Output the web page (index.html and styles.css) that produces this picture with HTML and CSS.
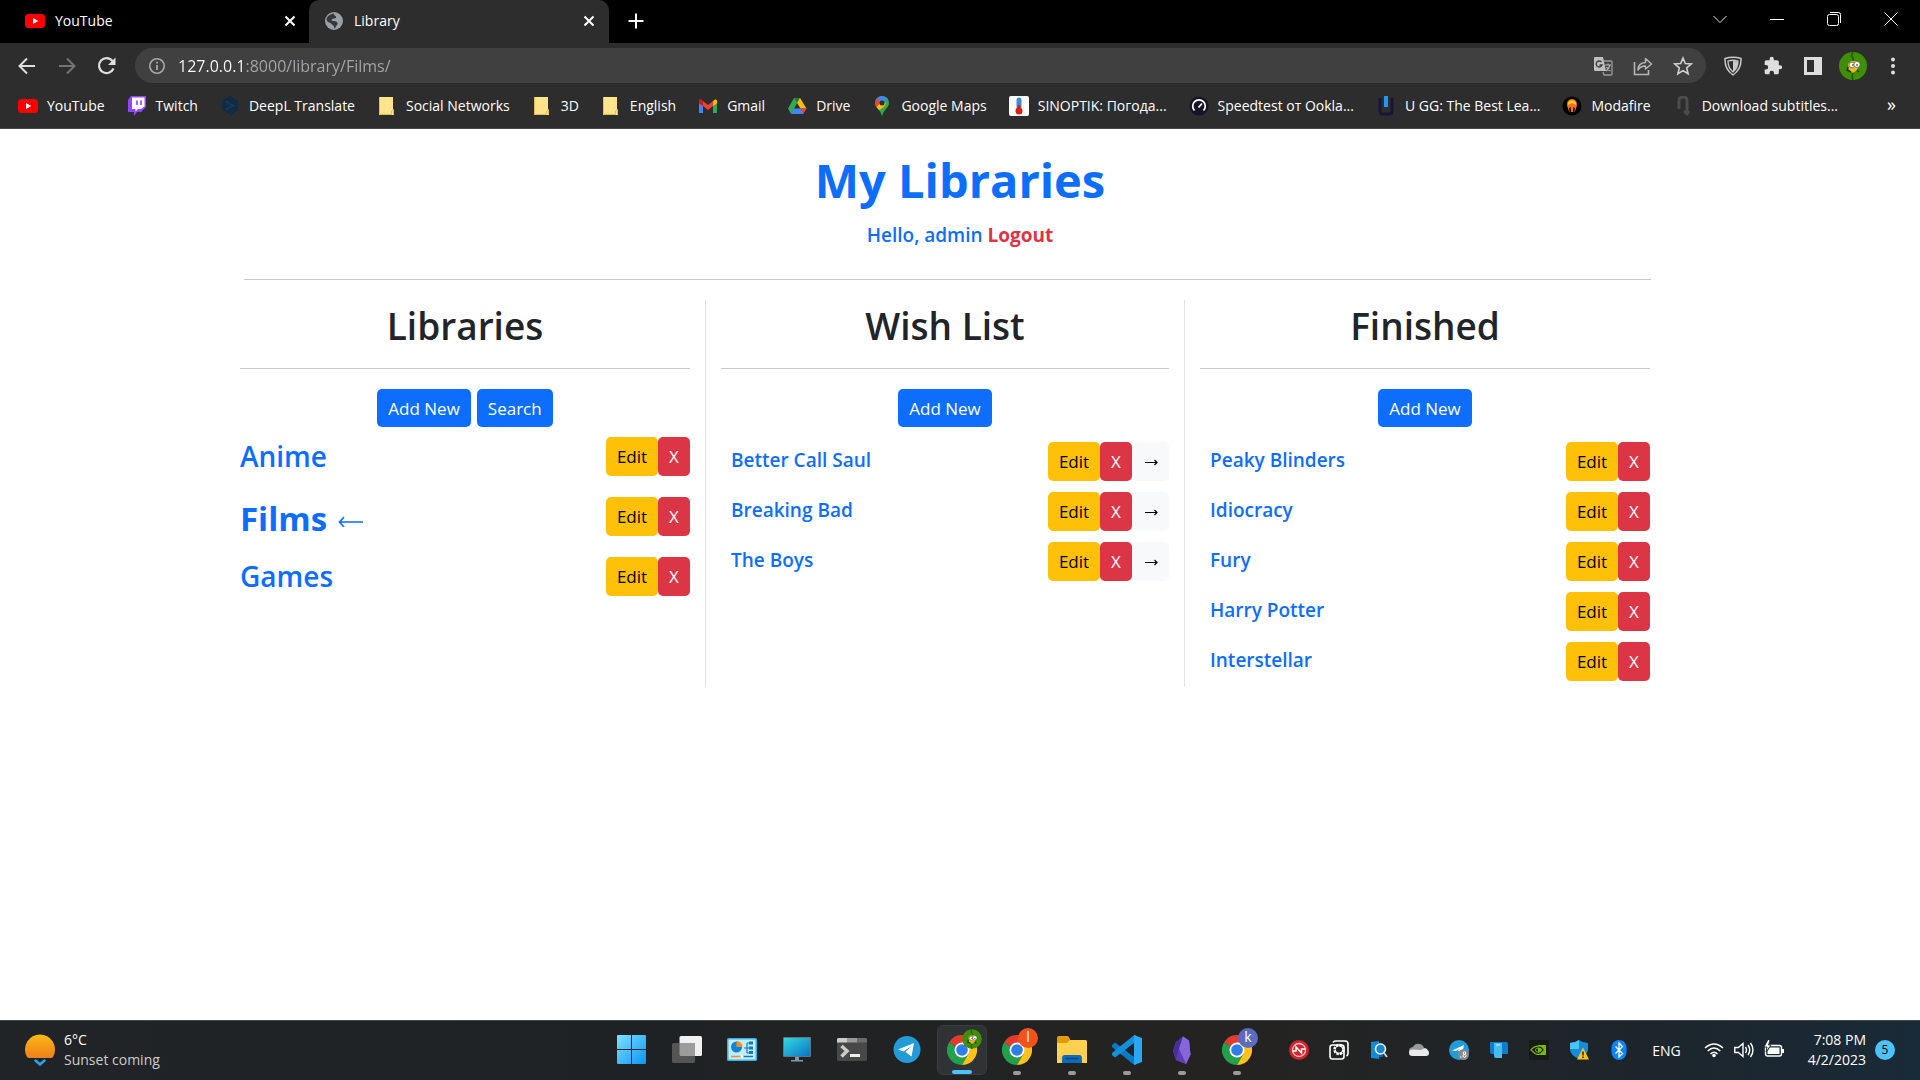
FILE: index.html
```html
<!DOCTYPE html>
<html lang="en">
<head>
<meta charset="utf-8">
<title>Library</title>
<link rel="stylesheet" href="styles.css">
</head>
<body>
<svg class="defs" aria-hidden="true">
  <symbol id="close" viewBox="0 0 12 12"><path d="M1.5 1.5l9 9M10.500 1.500l-9 9" stroke="#fff" stroke-width="2" fill="none"/></symbol>
  <symbol id="youtube" viewBox="0 0 20 20"><rect y="3" width="20" height="14" rx="3.500" fill="#f00"/><path d="M8 7l5.200 3L8 13z" fill="#fff"/></symbol>
  <symbol id="folder" viewBox="0 0 20 20"><path d="M2 1h14v13l1 1v4H2z" fill="#ffe48c"/><path d="M2.500 1v17.500h12V15l2-1.500V18.500" fill="none" stroke="#e3bd4c"/></symbol>
  <symbol id="chrome" viewBox="0 0 30 30">
    <path d="M15 15L2 7.500A15 15 0 0 1 28 7.500z" fill="#e33b2e"/>
    <path d="M15 15L2 7.500A15 15 0 0 0 15 30l6.500-11.200z" fill="#22a04a"/>
    <path d="M15 7.500H28A15 15 0 0 1 15 30l6.500-11.200z" fill="#fcc21b"/>
    <circle cx="15" cy="15" r="7.500" fill="#fff"/><circle cx="15" cy="15" r="5.800" fill="#2f7de9"/>
  </symbol>
  <symbol id="avatar" viewBox="0 0 28 28">
    <circle cx="14" cy="14" r="14" fill="#3f8f04"/><path d="M14 0l-1.500 4 2 3-1 4M14 28l-1-4 1.500-4" stroke="#1f5a00" stroke-width="1.500" fill="none"/>
    <path d="M9 12l3-3h6l2 4-2 5-4 3-4-3z" fill="#e8b92c"/><path d="M9 15l-1 3 4 2M18 18l2 2" stroke="#3a2b08" stroke-width="1.500" fill="none"/>
    <circle cx="13" cy="13" r="2.800" fill="#fff" stroke="#444" stroke-width=".6"/><circle cx="18" cy="12.500" r="3" fill="#fff" stroke="#444" stroke-width=".6"/><circle cx="14" cy="13" r=".8"/><circle cx="18" cy="13" r=".8"/>
  </symbol>
</svg>

<header class="browser">
  <div class="tabs">
    <div class="tab">
      <svg class="fav"><use href="#youtube"/></svg><span class="tab-title">YouTube</span>
      <button class="tab-close" aria-label="Close tab"><svg><use href="#close"/></svg></button>
    </div>
    <div class="tab active">
      <svg class="fav" viewBox="0 0 20 20"><circle cx="10" cy="10" r="9" fill="#9aa0a6"/><path d="M10 2.500c-1 2 3 2 2 4.500-2 1-4 0-4.500 2.500 2 1 5 0 6 2.500.5 2-1.500 2-2 4.500l-1.500 1.500C11 15 9 14.500 7.500 13c-1-1.500-4-1.500-5-4C3 5 6 3 10 2.500z" fill="#35373a"/></svg>
      <span class="tab-title">Library</span>
      <button class="tab-close" aria-label="Close tab"><svg><use href="#close"/></svg></button>
    </div>
    <button class="new-tab" aria-label="New tab"><svg viewBox="0 0 16 16"><path d="M8 .5v15M.5 8h15" stroke="#fff" stroke-width="2"/></svg></button>
    <div class="window-buttons">
      <button aria-label="Search tabs"><svg viewBox="0 0 14 14"><path d="M.5 4l6.500 6.500L13.500 4" fill="none" stroke="#ddd"/></svg></button>
      <button aria-label="Minimize"><svg viewBox="0 0 14 14"><path d="M0 7.500h14" stroke="#fff"/></svg></button>
      <button aria-label="Restore"><svg viewBox="0 0 14 14"><rect x=".5" y="2.500" width="11" height="11" rx="2" fill="none" stroke="#fff"/><path d="M3 .5h8.500q2 0 2 2V11" fill="none" stroke="#fff"/></svg></button>
      <button aria-label="Close"><svg viewBox="0 0 14 14"><path d="M.5.5l13 13M13.500.5l-13 13" stroke="#fff"/></svg></button>
    </div>
  </div>

  <div class="toolbar">
    <button class="tool" aria-label="Back"><svg viewBox="0 0 20 20"><path d="M18 10H3M10 2.500L2.500 10l7.500 7.500" fill="none" stroke="#dedede" stroke-width="2"/></svg></button>
    <button class="tool" aria-label="Forward"><svg viewBox="0 0 20 20"><path d="M2 10h15M10 2.500l7.500 7.500-7.500 7.500" fill="none" stroke="#737373" stroke-width="2"/></svg></button>
    <button class="tool" aria-label="Reload"><svg viewBox="0 0 20 20"><path d="M16.500 12.500A7.500 7.500 0 1 1 15.500 5" fill="none" stroke="#dedede" stroke-width="2.200"/><path d="M18.500 1.500v7.500H11z" fill="#dedede"/></svg></button>
    <div class="omnibox">
      <svg class="info" viewBox="0 0 18 18"><circle cx="9" cy="9" r="7.200" fill="none" stroke="#a6a9ad" stroke-width="1.600"/><path d="M9 8v5M9 4.800v1.800" stroke="#a6a9ad" stroke-width="1.800"/></svg>
      <input class="url" type="text" aria-label="Address" value="127.0.0.1:8000/library/Films/">
      <button class="tool" aria-label="Translate"><svg viewBox="0 0 20 20"><path d="M2 1h8l3 14H2q-1 0-1-1V2q0-1 1-1z" fill="#c0c0c0"/><path d="M10.500 5H18q1 0 1 1v12q0 1-1 1h-7l-1-3" fill="none" stroke="#9a9a9a" stroke-width="1.300"/><path d="M12 9h6M15 7.500V9M17 9q-1 4-4 6M13.500 11q1 2.500 4 4" fill="none" stroke="#b5b5b5" stroke-width="1.200"/><path d="M8.500 6A3 3 0 1 0 9 9H6.500" fill="none" stroke="#3f3f3f" stroke-width="1.400"/></svg></button>
      <button class="tool" aria-label="Share"><svg viewBox="0 0 20 20"><path d="M1.500 6v12.500h14V14" fill="none" stroke="#b5b5b5" stroke-width="1.600"/><path d="M5 14q0-7 7.500-7.500V2.500L18.500 8l-6 5V10Q7.500 10 5 14z" fill="none" stroke="#b5b5b5" stroke-width="1.500" stroke-linejoin="round"/></svg></button>
      <button class="tool" aria-label="Bookmark"><svg viewBox="0 0 20 20"><path d="M10 2l2.300 5.500 6 .5-4.600 3.900 1.400 5.800L10 14.600l-5.100 3.100 1.400-5.800L1.700 8l6-.5z" fill="none" stroke="#d0d0d0" stroke-width="1.600"/></svg></button>
    </div>
    <div class="extensions">
      <button class="tool" aria-label="Shield"><svg viewBox="0 0 20 20"><path d="M2 2.500q8-2.500 16 0Q18.500 13 10 19 1.500 13 2 2.500z" fill="none" stroke="#c8c8c8" stroke-width="1.500"/><path d="M5 5q5-1.500 10 0 0 7-5 11Q5 12 5 5z" fill="none" stroke="#c8c8c8" stroke-width="1.300"/><path d="M10 5q3 0 5 .5Q15 12 10 16z" fill="#c8c8c8"/></svg></button>
      <button class="tool" aria-label="Extensions"><svg viewBox="0 0 24 24"><path d="M20.500 11H19V7a2 2 0 0 0-2-2h-4V3.500a2.500 2.500 0 0 0-5 0V5H4a2 2 0 0 0-2 2v3.800h1.500a2.700 2.700 0 0 1 0 5.400H2V20a2 2 0 0 0 2 2h3.800v-1.500a2.700 2.700 0 0 1 5.400 0V22H17a2 2 0 0 0 2-2v-4h1.500a2.500 2.500 0 0 0 0-5z" fill="#dedede"/></svg></button>
      <button class="tool" aria-label="Side panel"><svg viewBox="0 0 20 20"><path d="M1 1h18v18H1zM4 4v12h7V4z" fill="#dedede" fill-rule="evenodd"/></svg></button>
      <button class="tool" aria-label="Profile"><svg class="profile"><use href="#avatar"/></svg></button>
      <button class="tool" aria-label="Menu"><svg viewBox="0 0 20 20" fill="#dedede"><circle cx="10" cy="3.500" r="2"/><circle cx="10" cy="10" r="2"/><circle cx="10" cy="16.500" r="2"/></svg></button>
    </div>
  </div>

  <nav class="bookmarks">
    <a href="#"><svg><use href="#youtube"/></svg>YouTube</a>
    <a href="#"><svg viewBox="0 0 20 20"><path d="M4 0h15v11l-5 5h-4l-3 4v-4H1V4z" fill="#9146ff"/><path d="M5 1.500h12.500v9L14 13h-3l-2.500 2.500V13H5z" fill="#fff"/><path d="M10 4.500v4.500M14 4.500v4.500" stroke="#9146ff" stroke-width="1.700"/></svg>Twitch</a>
    <a href="#"><svg viewBox="0 0 20 20"><path d="M10 0l8 4.500v9.500L12 18v2l-3-2-7-4V4.500z" fill="#0f2b46"/><path d="M7 6l6 3.500-6 3.500" fill="none" stroke="#1d425e"/><circle cx="7" cy="6" r="1" fill="#1d425e"/><circle cx="13" cy="9.500" r="1" fill="#1d425e"/><circle cx="7" cy="13" r="1" fill="#1d425e"/></svg>DeepL Translate</a>
    <a href="#"><svg><use href="#folder"/></svg>Social Networks</a>
    <a href="#"><svg><use href="#folder"/></svg>3D</a>
    <a href="#"><svg><use href="#folder"/></svg>English</a>
    <a href="#"><svg viewBox="0 0 20 20"><path d="M1 4v13h4V9z" fill="#4285f4"/><path d="M19 4v13h-4V9z" fill="#34a853"/><path d="M15 5l2-1.500q2-.5 2 1.500v2.500L15 10z" fill="#fbbc04"/><path d="M1 5q0-2 2-1.500L10 9l5-4v5l-5 4-5-4-4-2.500z" fill="#ea4335"/><path d="M1 5q0-2 2-1.500L5 5v5L1 7.500z" fill="#c5221f"/></svg>Gmail</a>
    <a href="#"><svg viewBox="0 0 20 20"><path d="M7 2h6l-9 16-3-5.500z" fill="#34a853"/><path d="M7 2h6l6.500 10.500h-6z" fill="#fbbc04"/><path d="M7 2h6l-3 5z" fill="#188038"/><path d="M6.500 12.500h13L16 18H4z" fill="#4285f4"/><path d="M13.500 12.500h6L16 18z" fill="#ea4335"/></svg>Drive</a>
    <a href="#"><svg viewBox="0 0 20 20"><path d="M10 0q7 .5 7 7 0 3-3.500 6.500Q11 16 10 20q-1-4-3.500-6.500Q3 10 3 7q0-6.500 7-7z" fill="#34a853"/><path d="M5 2.500L9 6l-4.500 5Q1.500 6 5 2.500z" fill="#ea4335"/><path d="M4.500 11L9 6l5 1q-1 4-7 7z" fill="#fbbc04"/><path d="M10 0q3.500.2 5.500 2.500L10 8 5 2.500Q7 .2 10 0z" fill="#4285f4"/><circle cx="10" cy="7" r="2.500" fill="#2e2e2e"/></svg>Google Maps</a>
    <a href="#"><svg viewBox="0 0 20 20"><rect width="20" height="20" rx="2" fill="#fff"/><rect x="7.500" y="1.500" width="5" height="12" rx="2.500" fill="#3c8ed0"/><path d="M10 9v6" stroke="#e01b10" stroke-width="2.500"/><circle cx="10" cy="15" r="3.500" fill="#e01b10"/></svg>SINOPTIK: Погода...</a>
    <a href="#"><svg viewBox="0 0 20 20"><circle cx="10" cy="10" r="9.500" fill="#141526"/><path d="M5.500 14.500a6.300 6.300 0 1 1 9 0M9.500 11.500l3.500-4" fill="none" stroke="#fff" stroke-width="1.700"/></svg>Speedtest от Ookla...</a>
    <a href="#"><svg viewBox="0 0 20 20"><path d="M4 2v13q0 3 3 3h6q3 0 3-3V2" fill="none" stroke="#17163a" stroke-width="3"/><path d="M10 0v11" stroke="#1b9af5" stroke-width="4"/></svg>U GG: The Best Lea...</a>
    <a href="#"><svg viewBox="0 0 20 20"><circle cx="10" cy="10" r="9.500"/><path d="M10 3c4 0 6 4 4.500 8L12.500 17l.3-5-1.300-1-.5 5H9l-.5-5-1.300 1 .3 5-2-6C4 7 6 3 10 3z" fill="#f5701b"/><path d="M6 6.500q4-5 8 0v2.500l-4-2-4 2z" fill="#ffc928"/></svg>Modafire</a>
    <a href="#"><svg viewBox="0 0 20 20"><path d="M6 13V5q0-4 4-4t4 4v12M11 15l3 3 2-3" fill="none" stroke="#4c4c4c" stroke-width="3"/></svg>Download subtitles...</a>
    <button class="more" aria-label="More bookmarks">»</button>
  </nav>
</header>

<main>
  <div class="masthead">
    <h1>My Libraries</h1>
    <p class="greeting">Hello, admin <a href="#">Logout</a></p>
  </div>
  <div class="container">
    <hr class="divider">
    <div class="columns">
      <section class="column">
        <h2>Libraries</h2>
        <div class="actions"><button class="btn primary">Add New</button><button class="btn primary">Search</button></div>
        <ul class="list libraries">
          <li><a href="#">Anime</a><div class="group"><button class="btn edit">Edit</button><button class="btn remove">X</button></div></li>
          <li><a href="#" class="current"><strong>Films</strong><svg viewBox="0 0 26 12"><path d="M25 7H1.500M6 2L1.500 7 6 12" fill="none" stroke="#0d6efd" stroke-width="1.700"/></svg></a><div class="group"><button class="btn edit">Edit</button><button class="btn remove">X</button></div></li>
          <li><a href="#">Games</a><div class="group"><button class="btn edit">Edit</button><button class="btn remove">X</button></div></li>
        </ul>
      </section>
      <section class="column ruled">
        <h2>Wish List</h2>
        <div class="actions"><button class="btn primary">Add New</button></div>
        <ul class="list">
          <li><a href="#">Better Call Saul</a><div class="group"><button class="btn edit">Edit</button><button class="btn remove">X</button><button class="btn move" aria-label="Move to finished"><svg viewBox="0 0 14 8"><path d="M1 4.500h12M10.500 2l2.500 2.500L10.500 7" fill="none" stroke="#000" stroke-width="1.200"/></svg></button></div></li>
          <li><a href="#">Breaking Bad</a><div class="group"><button class="btn edit">Edit</button><button class="btn remove">X</button><button class="btn move" aria-label="Move to finished"><svg viewBox="0 0 14 8"><path d="M1 4.500h12M10.500 2l2.500 2.500L10.500 7" fill="none" stroke="#000" stroke-width="1.200"/></svg></button></div></li>
          <li><a href="#">The Boys</a><div class="group"><button class="btn edit">Edit</button><button class="btn remove">X</button><button class="btn move" aria-label="Move to finished"><svg viewBox="0 0 14 8"><path d="M1 4.500h12M10.500 2l2.500 2.500L10.500 7" fill="none" stroke="#000" stroke-width="1.200"/></svg></button></div></li>
        </ul>
      </section>
      <section class="column">
        <h2>Finished</h2>
        <div class="actions"><button class="btn primary">Add New</button></div>
        <ul class="list">
          <li><a href="#">Peaky Blinders</a><div class="group"><button class="btn edit">Edit</button><button class="btn remove">X</button></div></li>
          <li><a href="#">Idiocracy</a><div class="group"><button class="btn edit">Edit</button><button class="btn remove">X</button></div></li>
          <li><a href="#">Fury</a><div class="group"><button class="btn edit">Edit</button><button class="btn remove">X</button></div></li>
          <li><a href="#">Harry Potter</a><div class="group"><button class="btn edit">Edit</button><button class="btn remove">X</button></div></li>
          <li><a href="#">Interstellar</a><div class="group"><button class="btn edit">Edit</button><button class="btn remove">X</button></div></li>
        </ul>
      </section>
    </div>
  </div>
</main>

<footer class="taskbar">
  <button class="weather">
    <svg viewBox="0 0 32 32"><defs><linearGradient id="sun" x2="0" y2="1"><stop stop-color="#fdb813"/><stop offset="1" stop-color="#f0801c"/></linearGradient></defs><path d="M2.500 22A15 15 0 1 1 29.500 22Q29 24 27 24H5Q3 24 2.500 22z" fill="url(#sun)"/><path d="M10 24h12v4l-6 4-6-4z" fill="#202426"/><path d="M11.500 26.500l4.500 4 4.500-4" fill="none" stroke="#2ea3e8" stroke-width="2.500" stroke-linecap="round"/></svg>
    <span class="weather-text"><span>6°C</span><span class="muted">Sunset coming</span></span>
  </button>
  <div class="apps">
    <button class="app" aria-label="Start"><svg viewBox="0 0 30 30"><defs><linearGradient id="win" x2="1" y2="1"><stop stop-color="#7fe0ff"/><stop offset="1" stop-color="#0a96f5"/></linearGradient></defs><path d="M1 0h13v14H0V1q0-1 1-1zM15 0h13q1 0 1 1v13H15zM0 15h14v14H1q-1 0-1-1zM15 15h14v13q0 1-1 1H15z" fill="url(#win)"/></svg></button>
    <button class="app" aria-label="Task view"><svg viewBox="0 0 30 30"><rect x="7.500" y="1" width="22.500" height="20" rx="1.500" fill="#f0f0f0"/><rect y="8" width="23" height="20" rx="1.500" fill="#555"/><path d="M7.500 8H23v13H9q-1.500 0-1.500-1.500z" fill="#9c9c9c"/></svg></button>
    <button class="app" aria-label="Control panel"><svg viewBox="0 0 30 30"><rect y="3" width="30" height="23" rx="1.500" fill="#35b1ee"/><rect x="1.500" y="4.500" width="27" height="20" fill="#c3ecfc"/><circle cx="9.500" cy="12" r="5.500" fill="#0d83d6"/><path d="M9.500 12V6a6 6 0 0 1 6 6z" fill="#f78f1e"/><path d="M17 13h3M20 8v10M20 8h5M20 13h5M20 18h5" fill="none" stroke="#1579b8" stroke-width="1.200"/><path d="M22 8h4M22 13h4M22 17.500h4" stroke="#1579b8" stroke-width="3"/><path d="M4 21.500h10" stroke="#f78f1e" stroke-width="1.500"/><path d="M15 21.500h11" stroke="#1579b8" stroke-width="1.500"/><circle cx="15" cy="21.500" r="1.500" fill="#fff"/></svg></button>
    <button class="app" aria-label="This PC"><svg viewBox="0 0 30 30"><defs><linearGradient id="pc" x2="1" y2="1"><stop stop-color="#35d8dd"/><stop offset="1" stop-color="#0875c7"/></linearGradient></defs><rect x="1" y="2" width="28" height="20" rx="1" fill="#61767f"/><rect x="2" y="3" width="26" height="18" fill="url(#pc)"/><path d="M13 22h4v3h4v1.500H9V25h4z" fill="#8399a5"/></svg></button>
    <button class="app" aria-label="Terminal"><svg viewBox="0 0 30 30"><rect y="3" width="30" height="23" rx="1.500" fill="#484848"/><path d="M0 7.500V4.500Q0 3 1.500 3H10v4.500z" fill="#ccc"/><path d="M10 3h10v4.500H10z" fill="#999"/><path d="M20 3h8.500Q30 3 30 4.500v3H20z" fill="#6b6b6b"/><path d="M4.500 11l5.500 5-5.500 5.500" fill="none" stroke="#ccc" stroke-width="3.500"/><path d="M13 20.500h10" stroke="#eee" stroke-width="3"/></svg></button>
    <button class="app" aria-label="Telegram"><svg viewBox="0 0 30 30"><circle cx="15" cy="14.500" r="13.500" fill="#229bd8"/><path d="M6 14.500L22 8l-2.500 13.500-6-4.500 6-6-8 5.500z" fill="#fff"/></svg></button>
    <button class="app active running" aria-label="Chrome"><svg><use href="#chrome"/></svg><svg class="badge"><use href="#avatar"/></svg></button>
    <button class="app running" aria-label="Chrome, profile l"><svg><use href="#chrome"/></svg><span class="badge orange">l</span></button>
    <button class="app running" aria-label="File Explorer"><svg viewBox="0 0 30 30"><path d="M0 2.500Q0 1 1.500 1H11l2 3v5H0z" fill="#e39c09"/><path d="M0 8h10l3-3h15.500Q30 5 30 6.500V28H0z" fill="#ffd14f"/><path d="M5 28v-5q0-3 3-3h14q3 0 3 3v5z" fill="#0f6cbd"/><path d="M8.500 23.500h13" stroke="#0a477f" stroke-width="1.500"/></svg></button>
    <button class="app running" aria-label="Visual Studio Code"><svg viewBox="0 0 30 30"><path d="M0 10l3-2.500L24 23v7l-3-1L0 12z" fill="#087bc6"/><path d="M0 20l3 2.500L24 7V0l-3 1L0 18z" fill="#1191dc"/><path d="M22 0l8 3v24l-8 3z" fill="#2aa7f2"/><path d="M22 8v14l-9-7z" fill="#202426"/></svg></button>
    <button class="app running" aria-label="Obsidian"><svg viewBox="0 0 30 30"><path d="M16 1.500l6 4 1.500 14L19 29 9 25 6 16l3-9z" fill="#6c4fc4"/><path d="M16 1.500L9 7 6 16l3 9 3-11z" fill="#4a2d9b"/><path d="M16 1.500L12 14l7 15 4.500-9.500L22 5.500z" fill="#8567db"/><path d="M12 14L9 25l10 4z" fill="#5b3db4"/></svg></button>
    <button class="app running" aria-label="Chrome, profile k"><svg><use href="#chrome"/></svg><span class="badge indigo">k</span></button>
  </div>
  <div class="tray">
    <button aria-label="Network monitor"><svg viewBox="0 0 20 20"><circle cx="10" cy="10" r="10" fill="#d5212b"/><circle cx="10" cy="10" r="6.500" fill="none" stroke="#f3c9cb" stroke-width="1.300"/><path d="M3.500 11H7V7l5.500 6V9h4" fill="none" stroke="#fff" stroke-width="1.500"/></svg></button>
    <button aria-label="Capture"><svg viewBox="0 0 20 20"><rect x="1" y="5" width="14" height="14" rx="2.500" fill="none" stroke="#fff" stroke-width="1.600"/><path d="M4 2.500Q5 1 6.500 1H16q3 0 3 3v9.500Q19 15 17.500 16" fill="none" stroke="#fff" stroke-width="1.600"/><circle cx="10" cy="9.500" r="4.500" fill="#202426" stroke="#fff" stroke-width="2.500" stroke-dasharray="2.500 1"/><circle cx="10" cy="9.500" r="3.800" fill="none" stroke="#fff"/></svg></button>
    <button aria-label="Search"><svg viewBox="0 0 20 20"><path d="M2 2l8-1v18l-8-1z" fill="#128bd8"/><path d="M10 3h4v14h-4z" fill="#0b5fa5"/><circle cx="11.500" cy="9" r="5" fill="#1689cf" stroke="#eee" stroke-width="1.600"/><path d="M15 13l3 4" stroke="#ccc" stroke-width="2"/></svg></button>
    <button aria-label="OneDrive"><svg viewBox="0 0 20 20"><path d="M0 12a4 4 0 0 1 4-5 6 6 0 0 1 11 1l1 2L6 15z" fill="#999"/><path d="M3.500 16Q0 16 0 13q0-3 3-3.500L12 10l4-2q4 2 4 5 0 3-3 3z" fill="#e9e9e9"/></svg></button>
    <button aria-label="Telegram"><svg viewBox="0 0 20 20"><circle cx="10" cy="10" r="10" fill="#229bd8"/><path d="M3 10.500L15 5l-2 9-4-3.500 2-2-4 2.500z" fill="#fff"/><circle cx="14.500" cy="14.500" r="5.500" fill="#87898b"/><circle cx="15.500" cy="13" r="1.300" fill="none" stroke="#fff"/><circle cx="15.500" cy="15.800" r="1.500" fill="none" stroke="#fff"/><path d="M11 17h1.500" stroke="#fff"/></svg></button>
    <button aria-label="Phone link"><svg viewBox="0 0 20 20"><path d="M1 2h16q2 0 2 2v10H3q-2 0-2-2z" fill="#127cc8"/><path d="M5 3h8v15H7q-2 0-2-2z" fill="#48bdf2"/><path d="M7 5h4" stroke="#dff5ff"/></svg></button>
    <button aria-label="NVIDIA"><svg viewBox="0 0 20 20"><rect width="20" height="20" fill="#171a17"/><path d="M9 5h8v10H9z" fill="#76b900"/><path d="M2 10q4-5 9-3.500l4 3.500q-5 6-9 3.500z" fill="none" stroke="#76b900" stroke-width="1.300"/><path d="M9 7q4 0 5 3-2 3-5 3.500" fill="none" stroke="#171a17" stroke-width="1.200"/><circle cx="8.500" cy="10" r="2" fill="none" stroke="#76b900"/></svg></button>
    <button aria-label="Security"><svg viewBox="0 0 20 20"><path d="M10 0q4 3 9 3v6q0 6-9 10Q1 15 1 9V3q5 0 9-3z" fill="#148de0"/><path d="M10 0v9H1V3q5 0 9-3z" fill="#4cc2f7"/><path d="M14 7.500l6 12H8z" fill="#fcc21b"/><path d="M14 11.500v4M14 16.500v1.500" stroke="#202426" stroke-width="1.500"/></svg></button>
    <button aria-label="Bluetooth"><svg viewBox="0 0 20 20"><rect x="2.500" width="15" height="20" rx="7.500" fill="#0a84ff"/><path d="M6.500 6.500l7 7L10 17V3l3.500 3.500-7 7" fill="none" stroke="#fff" stroke-width="1.300"/></svg></button>
  </div>
  <button class="language">ENG</button>
  <button class="status" aria-label="Network, volume, battery">
    <svg viewBox="0 0 20 20"><path d="M1 8q9-8 18 0M3.700 11q6.300-6 12.600 0M6.500 14q3.500-3.500 7 0" fill="none" stroke="#fff" stroke-width="1.400"/><circle cx="10" cy="15.500" r="1.800" fill="#fff"/></svg>
    <svg viewBox="0 0 20 20"><path d="M.8 7.500h3.500L9 3.500v13l-4.700-4H.8zM11.500 7q2 3 0 6M14 5q3.500 5 0 10M16.500 3q5 7 0 14" fill="none" stroke="#fff" stroke-width="1.400"/></svg>
    <svg viewBox="0 0 20 20"><rect x="1.500" y="5.500" width="16" height="10.500" rx="2" fill="none" stroke="#fff" stroke-width="1.400"/><path d="M6 7.500h9.500v6.500H3.500v-3zM18 9h2v4h-2z" fill="#fff"/><path d="M4-.5L0 7h3l-1 5 5-7H4.500L6 0z" fill="#fff" stroke="#202426" stroke-width=".8"/></svg>
  </button>
  <button class="clock"><span>7:08 PM</span><span>4/2/2023</span></button>
  <button class="notifications">5</button>
</footer>
</body>
</html>
```

FILE: styles.css
```css
* { box-sizing: border-box; }

body {
  margin: 0;
  min-height: 100vh;
  display: flex;
  flex-direction: column;
  background: #fff;
  color: #212529;
  font-family: "Open Sans", "Noto Sans", sans-serif;
  font-size: 16px;
}

button, input { font: inherit; color: inherit; background: none; border: 0; padding: 0; }
a { text-decoration: none; }
svg { display: block; flex: none; }
.defs { position: absolute; width: 0; height: 0; }

/* Browser window */
.browser { background: #2d2d2d; color: #fff; font-size: 14px; border-bottom: 1px solid #4a4a4a; }

.tabs { display: flex; height: 43px; background: #000; }
.tab { width: 300px; display: flex; align-items: center; gap: 10px; padding: 0 14px 2px 15px; }
.tab:first-child { width: 309px; padding: 0 13px 2px 25px; }
.tab.active { background: #2d2d2d; border-radius: 10px 10px 0 0; }
.fav { width: 20px; height: 20px; }
.tab-title { flex: 1; }
.tab-close { width: 12px; height: 12px; }
.tab-close svg { width: 12px; height: 12px; }
.new-tab { width: 54px; display: flex; align-items: center; justify-content: center; padding-bottom: 2px; }
.new-tab svg { width: 16px; height: 16px; }
.window-buttons { display: flex; margin-left: auto; height: 37px; padding-right: 1px; }
.window-buttons button { width: 57px; display: flex; align-items: center; justify-content: center; }
.window-buttons svg { width: 14px; height: 14px; }

.toolbar { display: flex; align-items: center; height: 45px; padding: 0 7px; }
.tool { width: 40px; height: 36px; display: flex; align-items: center; justify-content: center; }
.tool svg { width: 20px; height: 20px; }
.tool .profile { width: 28px; height: 28px; }
.omnibox { flex: 1; display: flex; align-items: center; height: 35px; margin-left: 8px; padding: 0 3px 0 13px; border-radius: 18px; background: #404040; }
.info { width: 18px; height: 18px; }
.url {
  flex: 1;
  margin-left: 12px;
  font-size: 16px;
  color: transparent;
  background: linear-gradient(to right, #fff 68px, #a5a8ab 68px);
  background-clip: text;
}
.extensions { display: flex; margin-left: 7px; }

.bookmarks { display: flex; align-items: center; height: 40px; padding: 0 24px 5px 18px; gap: 22px; white-space: nowrap; }
.bookmarks a { display: flex; align-items: center; gap: 9px; color: #fff; }
.bookmarks svg { width: 20px; height: 20px; }
.more { margin-left: auto; font-size: 18px; line-height: 20px; padding-bottom: 3px; }

/* Page */
main { flex: 1; }
.masthead { text-align: center; color: #0d6efd; padding-top: 19px; }
h1 { margin: 0; font-size: 47px; line-height: 64px; font-weight: 700; }
.greeting { margin: 10px 0 0; font-size: 19px; line-height: 26px; font-weight: 600; }
.greeting a { color: #dc3545; font-weight: 700; }

.container { margin: 31px 255px 0 225px; }
.divider { margin: 0 14px 20px 19px; border: 0; border-top: 1px solid #c8c9ca; }
.columns { display: grid; grid-template-columns: repeat(3, 1fr); }
.column { padding: 0 15px 6px; }
.ruled { border: solid #dee2e6; border-width: 0 1px; }
h2 { margin: 0 0 20px; padding: 2px 0 18px; border-bottom: 1px solid #c8c9ca; font-size: 37px; line-height: 48px; font-weight: 600; text-align: center; }
.actions { display: flex; justify-content: center; gap: 6px; }
.btn { height: 39px; padding: 0 10px; border-radius: 5px; font-size: 17px; }
.primary { height: 38px; padding: 0 11px; background: #0d6efd; color: #fff; }
.edit { width: 52px; background: #ffc107; color: #000; }
.remove { width: 32px; padding: 0; background: #dc3545; color: #fff; }
.move { width: 37px; background: #f8f9fa; }
.move svg { width: 14px; height: 8px; margin: auto; }

.list { list-style: none; margin: 15px 0 0; padding: 0 0 0 10px; display: grid; gap: 11px; }
.list li { display: flex; align-items: center; justify-content: space-between; height: 39px; }
.list a { color: #0d6efd; padding-bottom: 3px; font-size: 19px; font-weight: 600; }
.group { display: flex; }
.libraries { margin-top: 10px; padding-left: 0; gap: 21px; }
.list.libraries a { padding-bottom: 2px; font-size: 28px; }
.list.libraries .current { display: flex; align-items: center; gap: 11px; padding: 3px 0 0; }
.current strong { font-size: 33px; font-weight: 700; }
.current svg { width: 26px; height: 12px; margin-top: 5px; }

/* Taskbar */
.taskbar { display: flex; align-items: center; height: 60px; padding: 0 25px 1px 0; color: #fff; font-size: 14px; border-top: 1px solid #42474a; background: linear-gradient(to right, #202426, #1f2224 35%, #242321 65%, #1d252b 85%, #192a38); }
.weather { display: flex; align-items: center; gap: 8px; width: 607px; padding-left: 24px; text-align: left; }
.weather > svg { width: 32px; height: 32px; }
.weather-text, .clock { display: grid; line-height: 20px; }
.muted { color: #ccc; }
.apps { display: flex; gap: 5px; }
.app { position: relative; display: flex; align-items: center; justify-content: center; width: 50px; height: 50px; border-radius: 6px; }
.app > svg { width: 30px; height: 30px; }
.app.active { background: #2f3335; border: 1px solid #393d3f; }
.app.running::after { content: ""; position: absolute; bottom: 0; left: 21px; width: 8px; height: 4px; border-radius: 2px; background: #9a9c9d; }
.app.active::after { left: 14px; width: 20px; background: #4cc2ff; }
.app .badge { position: absolute; top: 3px; right: 4px; width: 20px; height: 20px; border-radius: 50%; line-height: 18px; }
.orange { background: #f4511e; }
.indigo { background: #5c6bc0; }
.tray { display: flex; gap: 20px; margin-left: auto; }
.tray svg, .status svg { width: 20px; height: 20px; }
.language { width: 75px; }
.status { display: flex; gap: 10px; }
.clock { width: 82px; text-align: right; }
.notifications { width: 20px; height: 20px; margin-left: 9px; border-radius: 50%; background: #4cc2ff; color: #000; font-size: 12px; line-height: 20px; }
```
